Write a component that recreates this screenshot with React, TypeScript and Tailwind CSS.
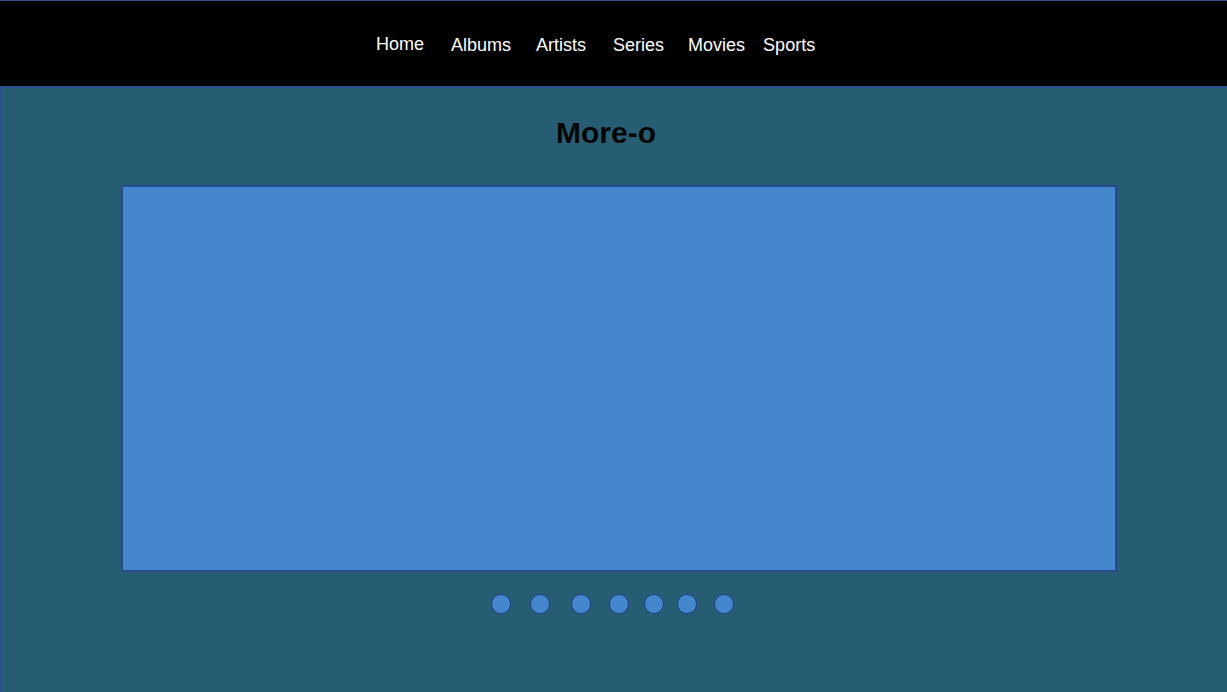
const links = [
  { label: "Home", cls: "ml-[376px] pt-[33px]" },
  { label: "Albums", cls: "ml-[27px] pt-[34px]" },
  { label: "Artists", cls: "ml-[25px] pt-[34px]" },
  { label: "Series", cls: "ml-[27px] pt-[34px]" },
  { label: "Movies", cls: "ml-[24px] pt-[34px]" },
  { label: "Sports", cls: "ml-[18px] pt-[34px]" },
];

const dots = ["ml-[490px]", "ml-[19px]", "ml-[21px]", "ml-[18px]", "ml-[15px]", "ml-[13px]", "ml-[17px]"];

export default function App() {
  return (
    <div className="w-[1227px] h-[692px] overflow-hidden font-['Liberation_Sans',Arial,sans-serif]">
      <nav className="h-[88px] bg-black border-t border-b-2 border-[#2b4f93] flex items-start">
        {links.map((link) => (
          <a
            key={link.label}
            href="#"
            className={`${link.cls} text-[18px] leading-[20px] text-white`}
          >
            {link.label}
          </a>
        ))}
      </nav>
      <main className="h-[604px] bg-[#275d73] border-l border-[#2b4f93] pt-[28px]">
        <h1 className="text-center pr-[16px] text-[30px] leading-[34px] font-bold text-[#050505]">
          More-o
        </h1>
        <div className="mt-[35px] ml-[120px] w-[996px] h-[387px] bg-[#4487cd] border-2 border-[#2a4a8f]" />
        <div className="flex mt-[22px]">
          {dots.map((d, i) => (
            <span
              key={i}
              className={`${d} w-[20px] h-[20px] rounded-full bg-[#4487cd] border-[1.5px] border-[#1f3f8a]`}
            />
          ))}
        </div>
      </main>
    </div>
  );
}
